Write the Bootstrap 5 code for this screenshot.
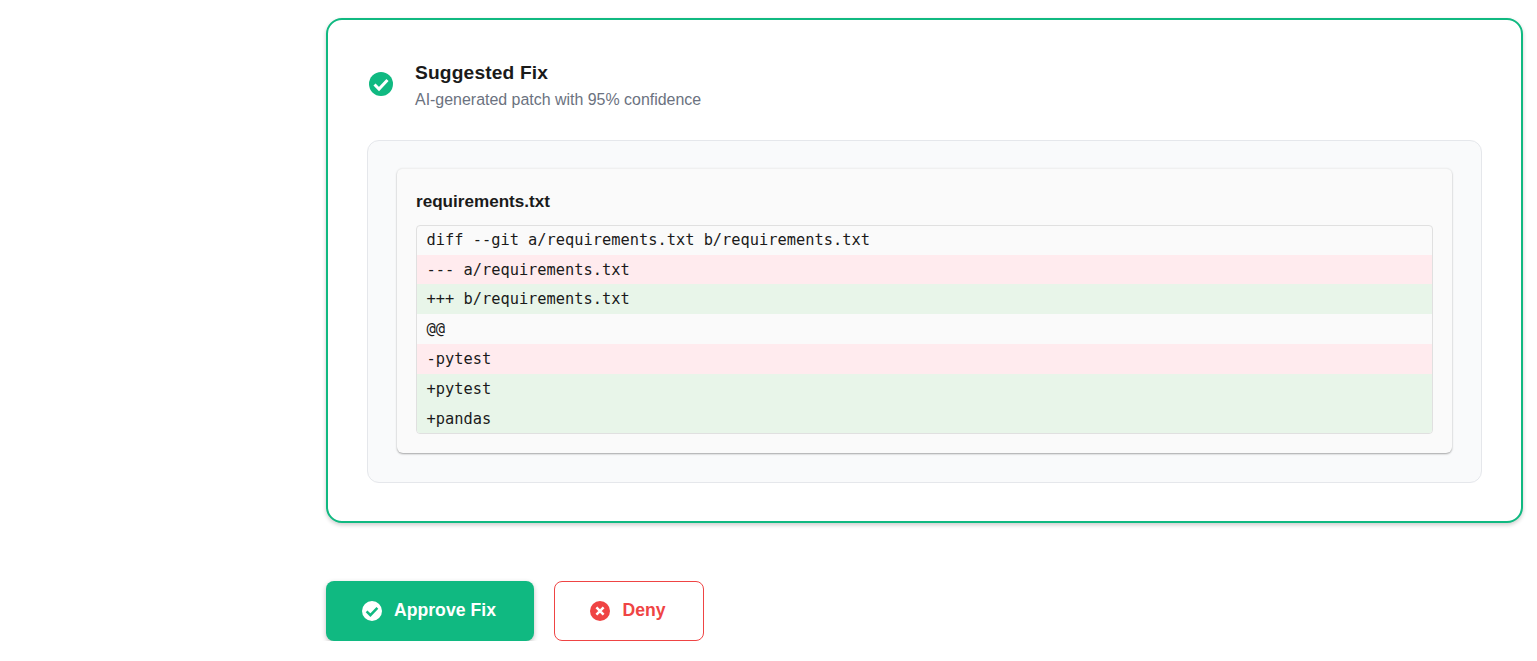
<!DOCTYPE html>
<html lang="en">
<head>
<meta charset="utf-8">
<title>Suggested Fix</title>
<link href="https://cdn.jsdelivr.net/npm/bootstrap@5.3.0/dist/css/bootstrap.min.css" rel="stylesheet">
<style>
body{background:#fff;font-family:"Liberation Sans",Arial,sans-serif;color:#1a1a1a;overflow:hidden}
.page-wrap{padding:18px 14px 0 326px}
.fix-card{border:2px solid #10b981;border-radius:16px;padding:40px 39px 38px;box-shadow:0 2px 4px rgba(0,0,0,.2);background:#fff}
.fix-head{height:50px;margin-bottom:30px}
.fix-icon{margin:-2px 22px 0 2px;flex:none}
.fix-title{font-size:19.2px;font-weight:700;line-height:24px;letter-spacing:.15px;color:#1a1a1a}
.fix-sub{font-size:15.95px;line-height:20px;color:#6b7280;margin-top:5px}
.patch-panel{background:#f9fafb;border:1px solid #e5e7eb;border-radius:12px;padding:27px 29px 29px 29px}
.file-card{background:#fafafa;border:0;border-top:1px solid #f0f0f0;border-radius:6px;padding:20px 19px 19px 19px;box-shadow:0 1px 2px rgba(0,0,0,.35)}
.file-name{font-size:17.1px;font-weight:700;line-height:26px;margin-bottom:10px;color:#1a1a1a}
.diff-box{border:1px solid #e0e0e0;border-radius:4px;overflow:hidden;font-family:"DejaVu Sans Mono","Liberation Mono",monospace;font-size:15.35px;line-height:30.4px;color:#1a1a1a;background:#fafafa}
.diff-line{padding:0 9.5px;white-space:pre;height:29.8px}
.diff-line:first-child{margin-top:-1.2px}
.diff-del{background:#ffebee}
.diff-add{background:#e8f5e9}
.action-row{margin-top:58px;gap:20px}
.act-btn{height:60px;border-radius:8px;font-size:17.6px;font-weight:700;letter-spacing:.05px;gap:12px;padding:0 2px 0 0}
.act-label{margin-top:-2px}
.act-ok{width:208px;background:#10b981;border:0;color:#fff;box-shadow:0 2px 5px rgba(0,0,0,.25)}
.act-ok:hover{background:#10b981;color:#fff}
.act-no{width:150px;background:#fff;border:1px solid #ef4444;color:#ef4444}
.act-no:hover{background:#fff;color:#ef4444}
</style>
</head>
<body>
<div class="page-wrap">
  <div class="card fix-card">
    <div class="d-flex align-items-center fix-head">
      <svg class="fix-icon" width="24" height="24" viewBox="0 0 24 24" aria-hidden="true"><circle cx="12" cy="12" r="12" fill="#10b981"/><path d="M5.5 12.5l4.5 4.5 8.5-9" fill="none" stroke="#fff" stroke-width="3"/></svg>
      <div class="fix-text">
        <div class="fix-title">Suggested Fix</div>
        <div class="fix-sub">AI-generated patch with 95% confidence</div>
      </div>
    </div>
    <div class="patch-panel">
      <div class="file-card">
        <div class="file-name">requirements.txt</div>
        <div class="diff-box">
          <div class="diff-line">diff --git a/requirements.txt b/requirements.txt</div>
          <div class="diff-line diff-del">--- a/requirements.txt</div>
          <div class="diff-line diff-add">+++ b/requirements.txt</div>
          <div class="diff-line">@@</div>
          <div class="diff-line diff-del">-pytest</div>
          <div class="diff-line diff-add">+pytest</div>
          <div class="diff-line diff-add">+pandas</div>
        </div>
      </div>
    </div>
  </div>
  <div class="d-flex action-row">
    <button type="button" class="btn act-btn act-ok d-flex align-items-center justify-content-center">
      <svg width="20" height="20" viewBox="0 0 20 20" aria-hidden="true"><circle cx="10" cy="10" r="10" fill="#fff"/><path d="M4.6 10.4l3.8 3.8 7-7.4" fill="none" stroke="#10b981" stroke-width="2.5"/></svg>
      <span class="act-label">Approve Fix</span>
    </button>
    <button type="button" class="btn act-btn act-no d-flex align-items-center justify-content-center">
      <svg width="20" height="20" viewBox="0 0 20 20" aria-hidden="true"><circle cx="10" cy="10" r="10" fill="#ef4444"/><path d="M6.4 6.4l7.2 7.2m0-7.2l-7.2 7.2" fill="none" stroke="#fff" stroke-width="2.5"/></svg>
      <span class="act-label">Deny</span>
    </button>
  </div>
</div>
<script src="https://cdn.jsdelivr.net/npm/bootstrap@5.3.0/dist/js/bootstrap.bundle.min.js"></script>
</body>
</html>
